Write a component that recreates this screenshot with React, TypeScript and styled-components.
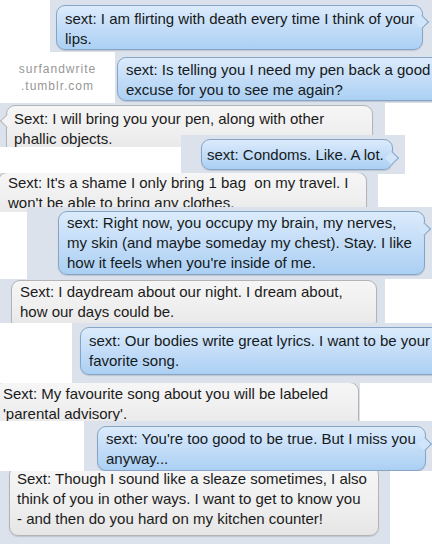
import styled, { createGlobalStyle, css } from 'styled-components';

const GlobalStyle = createGlobalStyle`
  html, body {
    margin: 0;
    padding: 0;
    background: #fff;
  }
  body {
    font-family: "Liberation Sans", Helvetica, Arial, sans-serif;
  }
`;

type Kind = 'blue' | 'gray';

interface Msg {
  kind: Kind;
  left: number;
  width: number;
  height: number;
  overlap?: number;
  bx: number;
  by: number;
  bw: number;
  bh: number;
  pt: number;
  pl: number;
  tail?: 'left' | 'right';
  tailTop?: number;
  lines: string[];
}

const Page = styled.div`
  width: 432px;
  height: 544px;
  overflow: hidden;
  display: flex;
  flex-direction: column;
`;

const Row = styled.div`
  display: flex;
  height: 51px;
  flex: none;
`;

const Watermark = styled.div`
  width: 115px;
  flex: none;
  display: flex;
  flex-direction: column;
  align-items: center;
  justify-content: center;
  font-size: 12px;
  line-height: 17px;
  letter-spacing: 1px;
  color: #979797;
  background: #fff;
`;

const Strip = styled.div<{ $left: number; $width: number; $height: number; $overlap: number }>`
  position: relative;
  flex: none;
  margin-left: ${p => p.$left}px;
  margin-top: ${p => -p.$overlap}px;
  width: ${p => p.$width}px;
  height: ${p => p.$height}px;
  overflow: hidden;
  background: #dce2eb;
`;

const blue = css`
  background: linear-gradient(180deg, #dbebfc 0%, #c6def8 45%, #abd0f4 100%);
  border-color: #86a5c6;
  color: #151a20;
`;

const gray = css`
  background: linear-gradient(180deg, #f6f6f6 0%, #eeeeee 60%, #e6e6e6 100%);
  border-color: #b2b4b8;
  color: #1b1b1b;
`;

const Bubble = styled.div<{
  $kind: Kind;
  $x: number;
  $y: number;
  $w: number;
  $h: number;
  $pt: number;
  $pl: number;
  $tail?: 'left' | 'right';
  $tailTop: number;
}>`
  position: relative;
  box-sizing: border-box;
  margin: ${p => p.$y}px 0 0 ${p => p.$x}px;
  width: ${p => p.$w}px;
  height: ${p => p.$h}px;
  padding: ${p => p.$pt}px 0 0 ${p => p.$pl}px;
  border: 1px solid;
  border-radius: 9px;
  font-size: 15px;
  line-height: 20px;
  box-shadow: 0 1px 1px rgba(60, 70, 90, 0.18);
  ${p => (p.$kind === 'blue' ? blue : gray)}

  ${p =>
    p.$tail &&
    css`
      &::after {
        content: '';
        position: absolute;
        top: ${p.$tailTop - 5.5}px;
        ${p.$tail === 'right' ? 'right: -5px;' : 'left: -5px;'}
        width: 9px;
        height: 9px;
        transform: rotate(45deg);
        background: ${p.$kind === 'blue' ? '#d0e5fa' : '#f4f4f4'};
        border: 0 solid ${p.$kind === 'blue' ? '#86a5c6' : '#b2b4b8'};
        ${p.$tail === 'right'
          ? 'border-top-width: 1px; border-right-width: 1px;'
          : 'border-bottom-width: 1px; border-left-width: 1px;'}
      }
    `}
`;

const Line = styled.div`
  white-space: pre;
`;

const messages: Msg[] = [
  {
    kind: 'blue', left: 50, width: 382, height: 52,
    bx: 6, by: 5, bw: 367, bh: 45, pt: 2.5, pl: 8, tail: 'right', tailTop: 16,
    lines: ['sext: I am flirting with death every time I think of your', 'lips.'],
  },
  {
    kind: 'blue', left: 0, width: 317, height: 51,
    bx: 2, by: 5, bw: 340, bh: 44, pt: 1.5, pl: 8,
    lines: ['sext: Is telling you I need my pen back a good', 'excuse for you to see me again?'],
  },
  {
    kind: 'gray', left: 0, width: 385, height: 44,
    bx: 6, by: 2, bw: 367, bh: 50, pt: 2.5, pl: 7, tail: 'left', tailTop: 15,
    lines: ['Sext: I will bring you your pen, along with other', 'phallic objects.'],
  },
  {
    kind: 'blue', left: 181, width: 224, height: 39, overlap: 12,
    bx: 20, by: 4, bw: 192, bh: 31, pt: 5, pl: 5, tail: 'right', tailTop: 18,
    lines: ['sext: Condoms. Like. A lot.'],
  },
  {
    kind: 'gray', left: 0, width: 378, height: 39, overlap: 1,
    bx: -2, by: -1, bw: 369, bh: 50, pt: 0, pl: 9,
    lines: ["Sext: It's a shame I only bring 1 bag  on my travel. I", "won't be able to bring any clothes."],
  },
  {
    kind: 'blue', left: 27, width: 405, height: 72, overlap: 5,
    bx: 31, by: 4, bw: 367, bh: 64, pt: 1, pl: 8, tail: 'right', tailTop: 17,
    lines: [
      'sext: Right now, you occupy my brain, my nerves,',
      'my skin (and maybe someday my chest). Stay. I like',
      "how it feels when you're inside of me.",
    ],
  },
  {
    kind: 'gray', left: 0, width: 385, height: 44,
    bx: 11, by: 1, bw: 366, bh: 50, pt: 0.5, pl: 8,
    lines: ['Sext: I daydream about our night. I dream about,', 'how our days could be.'],
  },
  {
    kind: 'blue', left: 72, width: 360, height: 60,
    bx: 8, by: 4, bw: 370, bh: 48, pt: 2.5, pl: 8,
    lines: ['sext: Our bodies write great lyrics. I want to be your', 'favorite song.'],
  },
  {
    kind: 'gray', left: 0, width: 360, height: 38,
    bx: -7, by: -1, bw: 366, bh: 50, pt: 1, pl: 9,
    lines: ['Sext: My favourite song about you will be labeled', "'parental advisory'."],
  },
  {
    kind: 'blue', left: 84, width: 348, height: 50,
    bx: 13, by: 5, bw: 329, bh: 45, pt: 1.5, pl: 8, tail: 'right', tailTop: 17,
    lines: ["sext: You're too good to be true. But I miss you", 'anyway...'],
  },
  {
    kind: 'gray', left: 0, width: 390, height: 73,
    bx: 9, by: -5, bw: 370, bh: 70, pt: 1.5, pl: 7,
    lines: [
      'Sext: Though I sound like a sleaze sometimes, I also',
      'think of you in other ways. I want to get to know you',
      '- and then do you hard on my kitchen counter!',
    ],
  },
];

function MessageStrip({ m }: { m: Msg }) {
  return (
    <Strip $left={m.left} $width={m.width} $height={m.height} $overlap={m.overlap ?? 0}>
      <Bubble
        $kind={m.kind}
        $x={m.bx}
        $y={m.by}
        $w={m.bw}
        $h={m.bh}
        $pt={m.pt}
        $pl={m.pl}
        $tail={m.tail}
        $tailTop={m.tailTop ?? 16}
      >
        {m.lines.map((line, i) => <Line key={i}>{line}</Line>)}
      </Bubble>
    </Strip>
  );
}

export default function App() {
  const [first, second, ...rest] = messages;
  return (
    <>
      <GlobalStyle />
      <Page>
        <MessageStrip m={first} />
        <Row>
          <Watermark>
            <span>surfandwrite</span>
            <span>.tumblr.com</span>
          </Watermark>
          <MessageStrip m={second} />
        </Row>
        {rest.map((m, i) => <MessageStrip key={i} m={m} />)}
      </Page>
    </>
  );
}
